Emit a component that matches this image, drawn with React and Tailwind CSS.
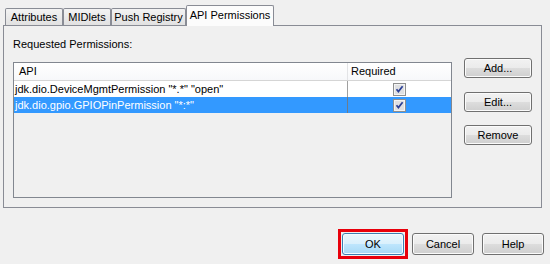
import React from "react";

const btn =
  "flex items-center justify-center h-[22px] rounded-[3px] border border-[#707070] bg-[linear-gradient(to_bottom,#f2f2f2_0%,#ebebeb_50%,#dddddd_50%,#cfcfcf_100%)] shadow-[inset_0_0_0_1px_#fbfbfb] text-[11px] text-black";

const Check = () => (
  <svg width="13" height="13" viewBox="0 0 13 13">
    <rect x="0.5" y="0.5" width="12" height="12" fill="#f4f4f4" stroke="#8e8f8f" />
    <rect x="2" y="2" width="9" height="9" fill="#dfe0e2" />
    <path d="M3.5 6.2 L5.4 8.6 L9.6 3.2" fill="none" stroke="#2b3f96" strokeWidth="1.7" />
  </svg>
);

const Tab = ({ label, width, active }) =>
  active ? (
    <div
      className={`${width} relative z-10 -mb-px h-[21px] flex items-center justify-center pb-[1px] border border-b-0 border-[#898c95] bg-[#fcfcfc] rounded-t-[2px]`}
    >
      {label}
    </div>
  ) : (
    <div
      className={`${width} h-[17px] flex items-center justify-center border border-b-0 border-[#898c95] bg-[linear-gradient(to_bottom,#f3f3f3,#e1e1e1)] rounded-t-[2px]`}
    >
      {label}
    </div>
  );

export default function App() {
  const rows = [
    { api: 'jdk.dio.DeviceMgmtPermission "*.*" "open"', selected: false },
    { api: 'jdk.dio.gpio.GPIOPinPermission "*:*"', selected: true },
  ];

  return (
    <div className="w-[550px] h-[264px] bg-[#f0f0f0] flex flex-col text-[11px] leading-[13px] text-black font-['Liberation_Sans',Arial,sans-serif]">
      {/* tab strip */}
      <div className="h-[25px] flex items-end pl-[5px]">
        <Tab label="Attributes" width="w-[58px]" />
        <Tab label="MIDlets" width="w-[48px]" />
        <Tab label="Push Registry" width="w-[75px]" />
        <Tab label="API Permissions" width="w-[88px]" active />
      </div>

      {/* panel */}
      <div className="ml-[3px] w-[539px] h-[183px] border border-[#898c95] bg-[#f0f0f0] pl-[9px] pt-[12px] flex">
        <div className="flex flex-col w-[439px]">
          <div>Requested Permissions:</div>
          <div className="mt-[11px] h-[136px] border border-[#828790] bg-[#f0f0f0] flex flex-col">
            <div className="flex h-[18px] border-b border-[#d5d5d5] bg-[linear-gradient(to_bottom,#ffffff,#f7f8fa)]">
              <div className="w-[334px] border-r border-[#e3e4e6] flex items-center pl-[5px]">API</div>
              <div className="flex-1 flex items-center pl-[3px]">Required</div>
            </div>
            {rows.map((r, i) => (
              <div
                key={i}
                className={`flex h-[16px] ${r.selected ? "bg-[#3399ff] text-white" : "bg-white"}`}
              >
                <div
                  className={`w-[334px] flex items-center pl-[1px] whitespace-nowrap border-r ${
                    r.selected ? "border-[#6d7c8c]" : "border-[#a0a0a0]"
                  }`}
                >
                  {r.api}
                </div>
                <div className="flex-1 flex items-center justify-center">
                  <Check />
                </div>
              </div>
            ))}
          </div>
        </div>

        <div className="ml-[12px] pt-[20px] flex flex-col">
          <button className={`${btn} w-[68px] !h-[20px]`}>Add...</button>
          <button className={`${btn} w-[68px] !h-[20px] mt-[14px]`}>Edit...</button>
          <button className={`${btn} w-[68px] !h-[20px] mt-[13px]`}>Remove</button>
        </div>
      </div>

      {/* dialog buttons */}
      <div className="mt-[25px] flex justify-end gap-[8px] pr-[6px]">
        <div className="relative">
          <button className="flex items-center justify-center w-[62px] h-[22px] rounded-[3px] border border-[#3c7fb1] bg-[linear-gradient(to_bottom,#eaf6fd_0%,#d9f0fc_50%,#bee6fd_50%,#a7d9f5_100%)] shadow-[inset_0_0_0_1px_#f4fbff] text-[11px] text-black">
            OK
          </button>
          <div className="absolute -inset-[4px] border-[3px] border-[#e8000b] pointer-events-none" />
        </div>
        <button className={`${btn} w-[62px]`}>Cancel</button>
        <button className={`${btn} w-[62px]`}>Help</button>
      </div>
    </div>
  );
}
